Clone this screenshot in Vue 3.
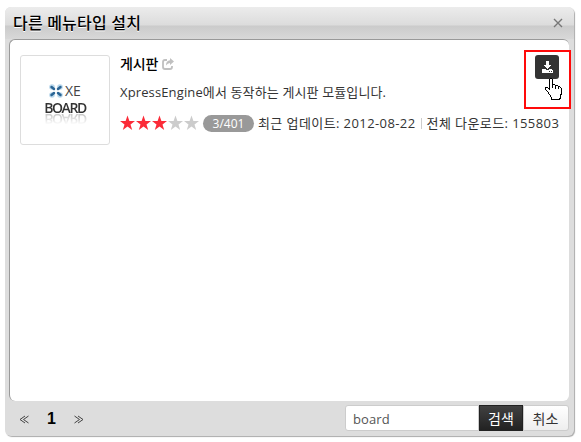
<script setup>
const stars = [true, true, true, false, false]
</script>

<template>
  <main class="page">
    <section class="modal">
      <header class="head">
        <h1 class="title">다른 메뉴타입 설치</h1>
        <svg class="close" width="10" height="10" viewBox="0 0 10 10"><path d="M1 1L9 9M9 1L1 9" /></svg>
      </header>
      <div class="panel">
        <div class="thumb">
          <div class="brand">
            <svg width="14" height="14" viewBox="0 0 14 14">
              <g fill="#b9d7eb"><circle cx="3" cy="3" r="2.8" /><circle cx="11" cy="3" r="2.8" /><circle cx="3" cy="11" r="2.8" /><circle cx="11" cy="11" r="2.8" /></g>
              <g stroke="#2b6595" stroke-width="2.5" stroke-linecap="round"><path d="M2.500 3L5 5M11.500 3L9 5M2.500 11L5 9M11.500 11L9 9" /></g>
            </svg>
            <span>XE</span>
          </div>
          <div class="board">BOARD</div>
        </div>
        <div class="info">
          <div class="name">
            <b>게시판</b>
            <svg width="12" height="12" viewBox="0 0 12 12">
              <path d="M5 2H3Q1 2 1 4v5q0 2 2 2h5q2 0 2-2V8" fill="none" stroke="#c0c0c0" stroke-width="1.8" />
              <path d="M8 0l4 3.600L8 7V5Q5.500 5 4 7.500Q4 2.500 8 2.200z" fill="#c0c0c0" />
            </svg>
          </div>
          <p class="desc">XpressEngine에서 동작하는 게시판 모듈입니다.</p>
          <div class="meta">
            <div class="stars">
              <svg v-for="(on, i) in stars" :key="i" width="16" height="16" viewBox="0 0 16 16">
                <path :class="on ? 'on' : 'off'" d="M7.500 .5L9.400 6H15L10.500 9.400L12.200 15L7.500 11.600L2.800 15L4.500 9.400L0 6H5.600z" />
              </svg>
            </div>
            <span class="badge">3/401</span>
            <span class="update">최근 업데이트: 2012-08-22</span>
            <i class="bar"></i>
            <span class="count">전체 다운로드: 155803</span>
          </div>
        </div>
        <button class="download">
          <svg width="12" height="12" viewBox="0 0 12 12" shape-rendering="crispEdges">
            <path d="M5 0h3v4h2v1H9v1H8v1H7v1H6V7H5V6H4V5H3V4h2z" fill="#fff" />
            <path d="M1 8h4v1h3V8h3v1h1v3H1z" fill="#fff" />
            <path d="M8 10h1v1H8zM10 10h1v1h-1z" fill="#333" />
          </svg>
        </button>
      </div>
      <footer class="foot">
        <nav class="pager">
          <svg width="10" height="9" viewBox="0 0 10 9"><path d="M6 1L1 4.500L6 8M9.500 1L4.500 4.500L9.500 8" /></svg>
          <b>1</b>
          <svg width="10" height="9" viewBox="0 0 10 9"><path d="M.5 1L5.500 4.500L.5 8M4 1L9 4.500L4 8" /></svg>
        </nav>
        <div class="search">
          <input class="field" value="board" />
          <button class="go">검색</button>
          <button class="cancel">취소</button>
        </div>
      </footer>
    </section>
    <div class="highlight"></div>
    <svg class="cursor" width="17" height="22" viewBox="0 0 17 22" shape-rendering="crispEdges">
      <path d="M5.500 .5h1l1 1v5h2l1 1h2l1 1h1l2 2v5l-1 2v2l-1 2h-8v-2l-2-3l-2-3l-2-2v-2h2l2 2v-10z" fill="#fff" stroke="#000" />
      <path d="M7.500 6v4M10.500 7v4M13.500 8v3" stroke="#000" fill="none" />
    </svg>
  </main>
</template>

<style>
body {
  margin: 0;
  background: #fff;
}
</style>

<style scoped>
* {
  box-sizing: border-box;
}
.page {
  position: relative;
  width: 581px;
  height: 442px;
  padding: 7px 0 0 5px;
  overflow: hidden;
  font: 13px "Open Sans", "Noto Sans CJK KR", sans-serif;
  color: #333;
}
.modal {
  width: 569px;
  height: 429px;
  padding: 0 4px;
  border-radius: 6px;
  background: #ddd;
  box-shadow: 1px 1px 1px #aaa;
}
.head {
  display: flex;
  align-items: center;
  justify-content: space-between;
  height: 32px;
  margin: 0 -4px;
  padding: 0 11px 0 8px;
  border-radius: 6px 6px 0 0;
  background: linear-gradient(#ececec 0, #dcdcdc 18px, #cbcbcb 19px, #d8d8d8 32px);
}
.title {
  margin: 0;
  color: #000;
  font-size: 16px;
  font-weight: 500;
  line-height: 32px;
  letter-spacing: 0.2px;
  white-space: nowrap;
  text-shadow: 0 1px 0 #fff;
}
.close path {
  stroke: #777;
  stroke-width: 1.4;
}
.panel {
  display: flex;
  align-items: flex-start;
  width: 560px;
  height: 362px;
  padding: 15px 9px 0 10px;
  border: solid #999;
  border-width: 1px 0 0 1px;
  border-radius: 6px;
  background: #fff;
}
.thumb {
  flex: none;
  width: 90px;
  height: 90px;
  padding-top: 27px;
  border: 1px solid #ddd;
  border-radius: 3px;
  font-size: 14px;
  color: #444;
}
.brand {
  display: flex;
  align-items: center;
  gap: 2px;
  height: 16px;
  padding-left: 28px;
  line-height: 16px;
  letter-spacing: -0.2px;
}
.board {
  height: 17px;
  color: #333;
  font-size: 14px;
  font-weight: 600;
  line-height: 17px;
  letter-spacing: -1.4px;
  text-align: center;
  -webkit-box-reflect: below -5px linear-gradient(transparent 20%, rgba(0, 0, 0, 0.35));
}
.info {
  flex: none;
  width: 425px;
  padding-left: 10px;
  white-space: nowrap;
}
.name {
  display: flex;
  align-items: center;
  gap: 4px;
  height: 18px;
}
.name b {
  margin-top: -3px;
  color: #000;
  font-size: 14px;
  font-weight: 500;
  letter-spacing: -0.1px;
}
.desc {
  margin: 10px 0 0;
  line-height: 18px;
  letter-spacing: 0.13px;
}
.meta {
  display: flex;
  align-items: center;
  height: 18px;
  margin-top: 13px;
}
.update,
.count {
  margin-top: -2px;
  letter-spacing: 0.41px;
}
.stars {
  display: flex;
  flex: none;
  width: 83px;
}
.on {
  fill: #fb2b38;
}
.off {
  fill: #ccc;
}
.badge {
  flex: none;
  width: 51px;
  height: 17px;
  margin-right: 4px;
  border-radius: 9px;
  background: #999;
  color: #fff;
  font-size: 12px;
  line-height: 17px;
  text-align: center;
}
.bar {
  flex: none;
  width: 1px;
  height: 11px;
  margin: 0 5px;
  background: #ccc;
}
.download {
  display: flex;
  flex: none;
  align-items: center;
  justify-content: center;
  width: 24px;
  height: 24px;
  padding: 0;
  border: 0;
  border-radius: 3px;
  background: #333;
}
.foot {
  display: flex;
  justify-content: space-between;
  padding: 4px 1px 0 10px;
}
.pager {
  display: flex;
  align-items: center;
  gap: 18px;
  height: 27px;
}
.pager svg {
  margin-top: 2px;
}
.pager path {
  fill: none;
  stroke: #444;
}
.pager b {
  color: #000;
  font: bold 16px "Liberation Sans", sans-serif;
}
.search {
  display: flex;
  height: 26px;
}
.field {
  width: 134px;
  padding: 1px 7px 0;
  border: 1px solid #ccc;
  border-radius: 3px 0 0 3px;
  background: #fff;
  color: #555;
  font: inherit;
  letter-spacing: 0.1px;
  outline: 0;
}
.go,
.cancel {
  width: 44px;
  padding: 0 0 1px;
  border: 1px solid #222;
  background: linear-gradient(#414141, #222);
  color: #fff;
  font: inherit;
  font-size: 14px;
}
.cancel {
  width: 46px;
  padding-right: 1px;
  border-color: #ccc;
  border-radius: 0 3px 3px 0;
  background: linear-gradient(#fff, #eee);
  color: #333;
}
.highlight {
  position: absolute;
  left: 524px;
  top: 50px;
  width: 47px;
  height: 59px;
  border: 2px solid #ff0a0a;
}
.cursor {
  position: absolute;
  left: 545px;
  top: 78px;
}
</style>
